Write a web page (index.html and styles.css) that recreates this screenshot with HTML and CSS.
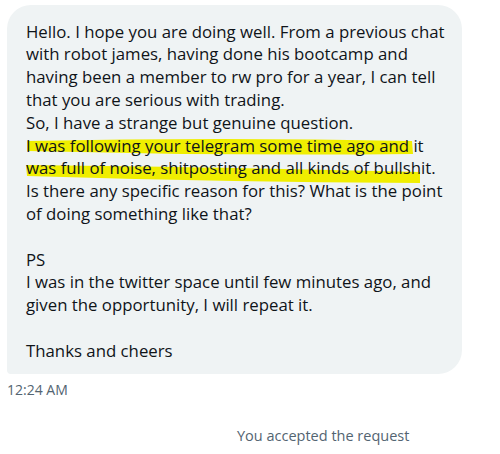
FILE: index.html
```html
<!DOCTYPE html>
<html>
<head>
<meta charset="utf-8">
<link rel="stylesheet" href="styles.css">
</head>
<body>
<div class="chat">
  <div class="bubble">
    <svg class="marks" width="455" height="369" viewBox="0 0 455 369" aria-hidden="true">
      <path d="M20,136 Q213,132 405,136 L406,149 Q213,151 20,146 Z" fill="#f0ee00"/>
      <path d="M19,160 Q213,162 413,167 L413,178 Q213,177 20,171 Z" fill="#f0ee00"/>
    </svg>
    <p class="msg">Hello. I hope you are doing well. From a previous chat<br>with robot james, having done his bootcamp and<br>having been a member to rw pro for a year, I can tell<br>that you are serious with trading.<br>So, I have a strange but genuine question.<br>I was following your telegram some time ago and it<br>was full of noise, shitposting and all kinds of bullshit.<br>Is there any specific reason for this? What is the point<br>of doing something like that?<br><br>PS<br>I was in the twitter space until few minutes ago, and<br>given the opportunity, I will repeat it.<br><br>Thanks and cheers</p>
  </div>
  <div class="time">12:24 AM</div>
  <div class="notice">You accepted the request</div>
</div>
</body>
</html>
```
FILE: styles.css
```css
html, body {
  margin: 0;
  padding: 0;
  background: #ffffff;
}
body {
  font-family: "Open Sans", "Noto Sans", "Liberation Sans", sans-serif;
  color: #0f1419;
}
.chat {
  padding: 5px 0 0 7px;
  width: 455px;
}
.bubble {
  position: relative;
  background: #eff3f4;
  border-radius: 24px 24px 24px 4px;
  padding: 15.6px 19px 11px 19px;
}
.marks {
  position: absolute;
  left: 0;
  top: 0;
}
.msg {
  position: relative;
  margin: 0;
  font-size: 16.8px;
  line-height: 22.8px;
  white-space: nowrap;
}
.time {
  margin-top: 7px;
  font-size: 14px;
  line-height: 18px;
  color: #536471;
}
.notice {
  margin-top: 27px;
  margin-left: 230px;
  font-size: 14.5px;
  line-height: 20px;
  color: #536471;
}
```
